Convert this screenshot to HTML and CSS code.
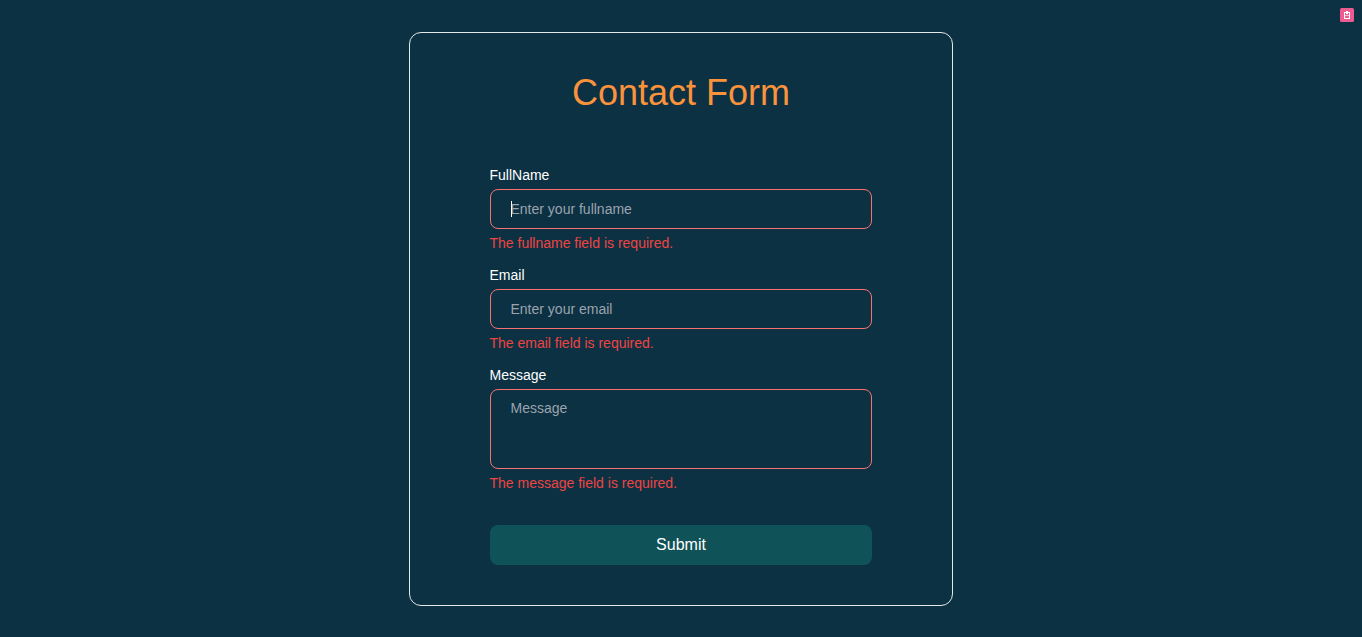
FILE: index.html
```html
<!DOCTYPE html>
<html lang="en">
<head>
<meta charset="utf-8">
<title>Contact Form</title>
<link rel="stylesheet" href="styles.css">
</head>
<body>
<main class="page">
  <form class="card" novalidate>
    <h1 class="title">Contact Form</h1>
    <div class="fields">
      <div class="field">
        <label class="label" for="fullname">FullName</label>
        <div class="control"><input class="input" id="fullname" type="text" placeholder="Enter your fullname"><span class="caret"></span></div>
        <p class="error">The fullname field is required.</p>
      </div>
      <div class="field">
        <label class="label" for="email">Email</label>
        <input class="input" id="email" type="email" placeholder="Enter your email">
        <p class="error">The email field is required.</p>
      </div>
      <div class="field">
        <label class="label" for="message">Message</label>
        <textarea class="input area" id="message" placeholder="Message"></textarea>
        <p class="error">The message field is required.</p>
      </div>
    </div>
    <button class="submit" type="button">Submit</button>
  </form>
</main>
<div class="badge">
  <svg width="14" height="14" viewBox="0 0 14 14"><path fill="#fff" fill-rule="evenodd" d="M4 4h2V3h2v1h2v7H4zM5 5v5h4V5H8v1H6V5z"/><path fill="#fff" fill-opacity=".6" d="M5 7h4v1H5z"/></svg>
</div>
</body>
</html>
```
FILE: styles.css
```css
* { box-sizing: border-box; margin: 0; }
body {
  background: #0b3142;
  color: #fff;
  font-family: "Liberation Sans", Arial, sans-serif;
}
.page { display: flex; justify-content: center; padding-top: 32px; height: 637px; }
.card {
  width: 544px;
  height: 574px;
  padding: 40px 80px;
  border: 1px solid #e5e7eb;
  border-radius: 12px;
}
.title {
  color: #fb923c;
  font-size: 36px;
  line-height: 40px;
  font-weight: 400;
  text-align: center;
}
.fields { margin-top: 52px; }
.field { height: 100px; }
.field:last-child { height: 140px; }
.label { display: block; font-size: 14px; line-height: 20px; margin-bottom: 4px; text-indent: -0.5px; }
.control { position: relative; }
.input {
  display: block;
  width: 382px;
  height: 40px;
  padding: 8px 19.5px;
  border: 1px solid #f87171;
  border-radius: 8px;
  background: transparent;
  color: #fff;
  font: 14px/20px "Liberation Sans", Arial, sans-serif;
  outline: none;
  resize: none;
}
.input::placeholder { color: #9ca3af; opacity: 1; }
.area { height: 80px; }
.caret { position: absolute; left: 21px; top: 12px; width: 1px; height: 16px; background: #fff; }
.error { margin-top: 4px; color: #ef4444; font-size: 14px; line-height: 20px; text-indent: -0.5px; }
.submit {
  display: block;
  width: 382px;
  height: 40px;
  margin-top: 20px;
  border: 0;
  border-radius: 8px;
  background: #0f5257;
  color: #fff;
  font: 16px/24px "Liberation Sans", Arial, sans-serif;
}
.badge {
  position: absolute;
  top: 8px;
  right: 8px;
  width: 14px;
  height: 14px;
  border-radius: 1.5px;
  background: #ee5a92;
}
.badge svg { display: block; }
```
